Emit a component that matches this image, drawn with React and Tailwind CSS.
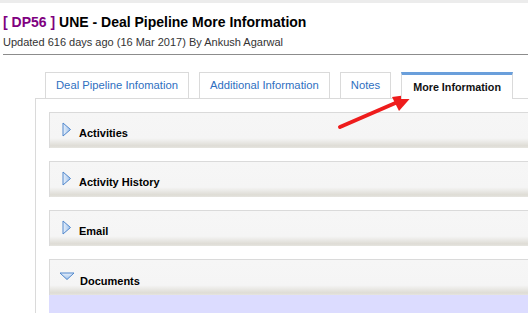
import React from "react";

const tabs = [
  { label: "Deal Pipeline Infomation" },
  { label: "Additional Information" },
  { label: "Notes" },
  { label: "More Information", active: true },
];

const sections = [
  { title: "Activities" },
  { title: "Activity History" },
  { title: "Email" },
  { title: "Documents", open: true },
];

const ArrowRight = () => (
  <svg width="10" height="15" viewBox="0 0 10 15" className="shrink-0">
    <defs>
      <linearGradient id="tr" x1="0" y1="0" x2="1" y2="0">
        <stop offset="0" stopColor="#e9f1fb" />
        <stop offset="1" stopColor="#9cc0ea" />
      </linearGradient>
    </defs>
    <polygon points="1,1 8.5,7.5 1,14" fill="url(#tr)" stroke="#4f86cc" strokeWidth="1" strokeLinejoin="round" />
  </svg>
);

const ArrowDown = () => (
  <svg width="16" height="9" viewBox="0 0 16 9" className="shrink-0">
    <defs>
      <linearGradient id="td" x1="0" y1="0" x2="0" y2="1">
        <stop offset="0" stopColor="#e9f1fb" />
        <stop offset="1" stopColor="#9cc0ea" />
      </linearGradient>
    </defs>
    <polygon points="1,1 15,1 8,7.5" fill="url(#td)" stroke="#4f86cc" strokeWidth="1" strokeLinejoin="round" />
  </svg>
);

const Section = ({ title, open }) => (
  <div className="flex flex-col">
    <div className="h-[36px] border-t border-l border-[#dadada] bg-[linear-gradient(to_bottom,#f6f6f6_0%,#f5f5f5_72%,#dedcd5_94%,#e6e5e0_100%)] flex items-start">
      {open ? (
        <div className="pl-[9px] pt-[12px] flex items-start">
          <ArrowDown />
          <span className="ml-[5px] mt-[3px] text-[11px] font-bold text-black leading-[13px]">{title}</span>
        </div>
      ) : (
        <div className="pl-[12px] pt-[9px] flex items-start">
          <ArrowRight />
          <span className="ml-[7px] mt-[5px] text-[11px] font-bold text-black leading-[13px]">{title}</span>
        </div>
      )}
    </div>
    {open && <div className="h-[30px] bg-[#dcdcff]" />}
  </div>
);

export default function App() {
  return (
    <div className="relative w-[528px] h-[313px] overflow-hidden bg-white font-['Liberation_Sans',Arial,sans-serif]">
      <div className="h-[3px] bg-[#ececec]" />

      <div className="pl-[3px]">
        <h1 className="mt-[11px] text-[14px] leading-[16px] font-bold text-black">
          <span className="text-[#800080]">[ DP56 ]</span> UNE - Deal Pipeline More Information
        </h1>
        <p className="mt-[6px] text-[11px] leading-[13px] text-[#333]">
          Updated 616 days ago (16 Mar 2017) By Ankush Agarwal
        </p>
        <div className="mt-[5px] border-t border-[#8c8c8c]" />
      </div>

      <div className="mt-[17px] pl-[45px] flex items-end gap-[10px]">
        {tabs.map((t) =>
          t.active ? (
            <div
              key={t.label}
              className="relative z-10 -mb-px h-[27px] px-[11px] bg-white border-l border-r border-[#dadada] border-t-[3px] border-t-[#6a9fdb] flex items-center text-[10.75px] font-bold text-[#111]"
            >
              {t.label}
            </div>
          ) : (
            <div
              key={t.label}
              className="h-[26px] px-[10px] border border-b-0 border-[#dadada] flex items-center text-[11.25px] text-[#2f6fbf]"
            >
              {t.label}
            </div>
          )
        )}
      </div>

      <div className="ml-[35px] border-t border-l border-[#dadada] pt-[13px] pl-[13px] flex flex-col gap-[13px]">
        {sections.map((s) => (
          <Section key={s.title} {...s} />
        ))}
      </div>

      <svg className="absolute left-0 top-0 pointer-events-none" width="528" height="313">
        <line x1="340" y1="127" x2="400" y2="101" stroke="#ee1c1c" strokeWidth="4" strokeLinecap="round" />
        <polygon points="414,94 392,97 399,111" fill="#ee1c1c" />
      </svg>
    </div>
  );
}
